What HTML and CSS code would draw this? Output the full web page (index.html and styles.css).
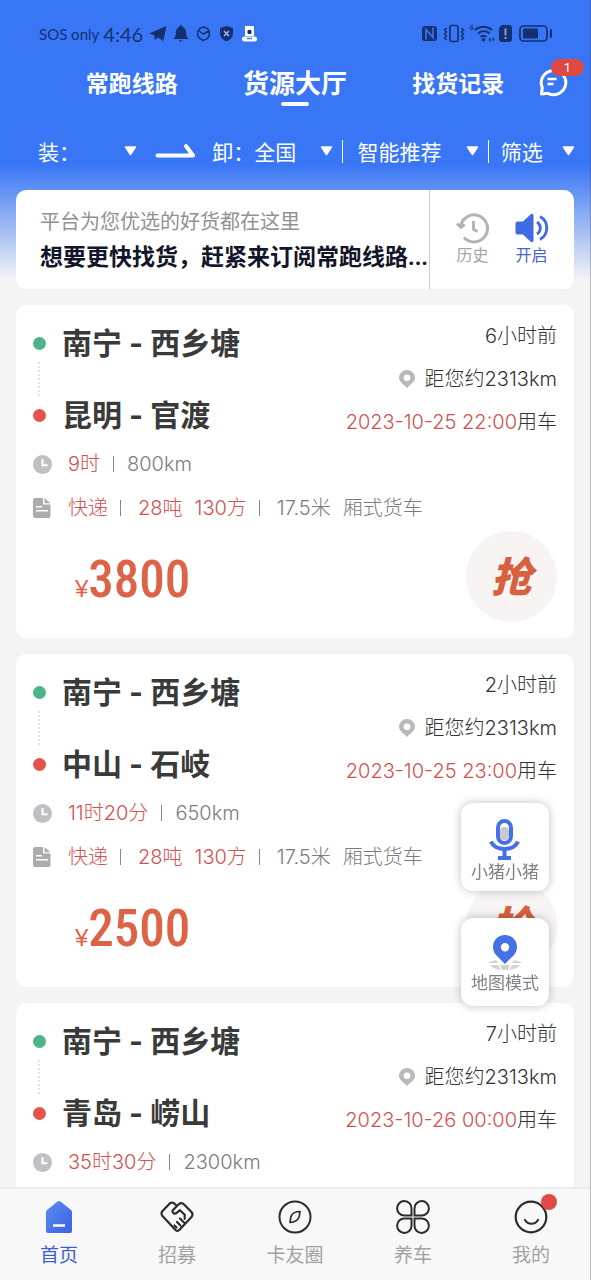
FILE: index.html
```html
<!DOCTYPE html>
<html lang="zh-CN">
<head>
<meta charset="utf-8">
<meta name="viewport" content="width=device-width, initial-scale=1">
<title>货源大厅</title>
<link rel="stylesheet" href="styles.css">
</head>
<body>
<svg class="sprite" aria-hidden="true">
  <symbol id="i-clock" viewBox="0 0 19 19"><circle cx="9.500" cy="9.500" r="9.500" fill="#bfc0c4"/><path d="M9.500 4v6.200h5" fill="none" stroke="#fff" stroke-width="2"/></symbol>
  <symbol id="i-doc" viewBox="0 0 18 20"><path d="M2 0h8v6.500h7.500V18a2 2 0 0 1-2 2H2a2 2 0 0 1-2-2V2a2 2 0 0 1 2-2zM11.500 0l6 5.200h-6z" fill="#acacae"/><path d="M3 8.800h6M3 12.800h12" stroke="#fff" stroke-width="1.500"/></symbol>
  <symbol id="i-pin" viewBox="0 0 16 18"><path fill-rule="evenodd" d="M8 0a8 7.800 0 0 1 8 7.800c0 4-4.500 6.500-8 10.200C4.500 14.300 0 11.800 0 7.800A8 7.800 0 0 1 8 0zm0 4.500a3.300 3.300 0 1 0 0 6.600 3.300 3.300 0 0 0 0-6.600z" fill="#b9b9bb"/></symbol>
  <symbol id="i-caret" viewBox="0 0 13 10"><path d="M1.500 1h10L6.500 8.500z" fill="#fff" stroke="#fff" stroke-width="1.500" stroke-linejoin="round"/></symbol>
</svg>
<div class="app">
  <header class="head">
    <div class="status">
      <span class="carrier">SOS only</span><span class="time">4:46</span>
      <svg class="s-left" width="109" height="18" viewBox="0 0 109 18" fill="#15306f">
        <path d="M0 8.500L17.500 1l-3.300 15-5.200-3.600-3 2.600-.8-5z"/>
        <path d="M31.500 0c1 0 1.500.7 1.500 1.500 3 1 4.200 3.300 4.200 6.200 0 3 .6 4.300 2 5.300v1H24.800v-1c1.400-1 2-2.300 2-5.300 0-2.900 1.200-5.200 4.200-6.200C30 .7 30.500 0 31.500 0zM29.500 15.300h4l-2 1.700z"/>
        <g fill="none" stroke="#15306f" stroke-width="1.500"><path d="M54.500 2l4 1.500 1.800 3v4l-1.800 3-4 2-4-2-1.800-3v-4l1.800-3zM50 6l4.500 3 6-3.500"/></g>
        <path d="M77.500 1l6.500 2v5c0 4-2.500 6.500-6.500 8.500C73.500 14.500 71 12 71 8V3z"/><path d="M75 6l5 5M80 6l-5 5" stroke="#9bb8f8" stroke-width="1.500"/>
        <path d="M96 1h9v10h-9z" fill="#fff"/><rect x="93" y="11.500" width="15" height="5" rx="2.500" fill="#fff"/><circle cx="100.500" cy="7" r="2.200"/><path d="M98 13.500h5" stroke="#3976f5" stroke-width="1.500"/>
      </svg>
      <svg class="s-right" width="131" height="20" viewBox="0 0 131 20" fill="#15306f">
        <rect x="0" y="2" width="15" height="15" rx="3"/><path d="M4 15.500V5.500l7 8V3.500" fill="none" stroke="#3976f5" stroke-width="1.600"/>
        <rect x="28" y="1.500" width="8" height="16" rx="1.500" fill="none" stroke="#15306f" stroke-width="1.700"/>
        <path d="M24.500 4l-2 2 2 2-2 2 2 2-2 2 2 2M39.500 4l2 2-2 2 2 2-2 2 2 2-2 2" fill="none" stroke="#15306f" stroke-width="1.500"/>
        <path d="M51 .800c-2.500.5-2.700 2.500-2.500 4s2.500 1.500 2.500-.3-1.600-1.500-2.500-.3" fill="none" stroke="#15306f" stroke-width="1"/>
        <path d="M53 6c5-4.500 12-4.500 17 0M56 9.500c3.500-3 8-3 11.500 0M58.500 13c2-1.700 4-1.700 6 0" fill="none" stroke="#15306f" stroke-width="2"/><circle cx="61.500" cy="15.800" r="1.800"/>
        <path d="M66.500 15.500l2-2.500v5zM72.500 15.500l-2-2.500v5z"/>
        <path d="M80 1h7a3 3 0 0 1 3 3v11a3 3 0 0 1-3 3h-7a3 3 0 0 1-3-3V4z"/><path d="M83.500 4.500v7M83.500 13v2" stroke="#87a9f5" stroke-width="1.800"/>
        <rect x="98" y="2" width="27" height="15" rx="3.500" fill="none" stroke="#15306f" stroke-width="1.700"/><rect x="101" y="4.500" width="15" height="10" rx="1"/><rect x="128" y="5" width="2" height="9" rx="1"/>
      </svg>
    </div>
    <nav class="tabs">
      <a href="#" class="tab">常跑线路</a>
      <a href="#" class="tab active">货源大厅</a>
      <a href="#" class="tab">找货记录</a>
      <button class="chat" aria-label="消息">
        <svg width="30" height="30" viewBox="0 0 30 30" fill="none" stroke="#fff" stroke-width="3"><path d="M4.300 20.500A12.300 12 0 1 1 10 26.300L3.500 27z" stroke-linejoin="round"/><path d="M9.500 12h9M9.500 17h6" stroke-width="2.500"/></svg>
        <span class="badge">1</span>
      </button>
    </nav>
    <div class="filters">
      <button class="filter load">装：<svg class="caret"><use href="#i-caret"/></svg></button>
      <svg class="arrow" width="42" height="16" viewBox="0 0 42 16"><path d="M2.500 12.500H38L31 3" fill="none" stroke="#fff" stroke-width="4" stroke-linecap="round" stroke-linejoin="round"/></svg>
      <button class="filter unload">卸：全国<svg class="caret"><use href="#i-caret"/></svg></button>
      <i class="bar"></i>
      <button class="filter smart">智能推荐<svg class="caret"><use href="#i-caret"/></svg></button>
      <i class="bar"></i>
      <button class="filter pick">筛选<svg class="caret"><use href="#i-caret"/></svg></button>
    </div>
  </header>

  <main class="list">
    <section class="promo">
      <div class="promo-text">
        <p class="promo-sub">平台为您优选的好货都在这里</p>
        <p class="promo-title">想要更快找货，赶紧来订阅常跑线路...</p>
      </div>
      <div class="promo-actions">
        <button class="tool">
          <svg width="34" height="32" viewBox="0 0 34 32" fill="none" stroke="#b3b3b3" stroke-width="3"><path d="M4.500 16A13.500 13.500 0 1 1 8 25.500"/><path d="M1 11.500l3.800 4 4-2.800" stroke-width="2.800"/><path d="M17.500 9v8.500l4 2" stroke-width="2.800"/></svg>
          历史
        </button>
        <button class="tool on">
          <svg width="34" height="32" viewBox="0 0 34 32"><path d="M2.500 9.500H8L15.500 2.500q3-2 3 1v25q0 3-3 1L8 22.500H2.500q-2 0-2-2v-9q0-2 2-2z" fill="#416be4"/><path d="M22 10c4.500 3 4.500 9 0 12M25 4.500c9 5 9 18 0 23" fill="none" stroke="#416be4" stroke-width="2.800"/></svg>
          开启
        </button>
      </div>
    </section>

    <article class="card">
      <div class="top">
        <div class="route">
          <h2 class="place"><i class="dot from"></i>南宁 - 西乡塘</h2>
          <i class="dots"></i>
          <h2 class="place"><i class="dot to"></i>昆明 - 官渡</h2>
        </div>
        <div class="meta">
          <p>6小时前</p>
          <p class="away"><svg class="pin"><use href="#i-pin"/></svg>距您约2313km</p>
          <p><span class="red">2023-10-25 22:00</span>用车</p>
        </div>
      </div>
      <p class="row"><svg class="ico"><use href="#i-clock"/></svg><span class="red">9时</span><i class="sep"></i><span>800km</span></p>
      <p class="row"><svg class="ico doc"><use href="#i-doc"/></svg><span class="red">快递</span><i class="sep wide"></i><span class="red">28吨</span><span class="red next">130方</span><i class="sep wide"></i><span>17.5米</span><span class="next">厢式货车</span></p>
      <div class="foot"><p class="price"><small>¥</small>3800</p><button class="grab">抢</button></div>
    </article>

    <article class="card">
      <div class="top">
        <div class="route">
          <h2 class="place"><i class="dot from"></i>南宁 - 西乡塘</h2>
          <i class="dots"></i>
          <h2 class="place"><i class="dot to"></i>中山 - 石岐</h2>
        </div>
        <div class="meta">
          <p>2小时前</p>
          <p class="away"><svg class="pin"><use href="#i-pin"/></svg>距您约2313km</p>
          <p><span class="red">2023-10-25 23:00</span>用车</p>
        </div>
      </div>
      <p class="row"><svg class="ico"><use href="#i-clock"/></svg><span class="red">11时20分</span><i class="sep"></i><span>650km</span></p>
      <p class="row"><svg class="ico doc"><use href="#i-doc"/></svg><span class="red">快递</span><i class="sep wide"></i><span class="red">28吨</span><span class="red next">130方</span><i class="sep wide"></i><span>17.5米</span><span class="next">厢式货车</span></p>
      <div class="foot"><p class="price"><small>¥</small>2500</p><button class="grab">抢</button></div>
    </article>

    <article class="card">
      <div class="top">
        <div class="route">
          <h2 class="place"><i class="dot from"></i>南宁 - 西乡塘</h2>
          <i class="dots"></i>
          <h2 class="place"><i class="dot to"></i>青岛 - 崂山</h2>
        </div>
        <div class="meta">
          <p>7小时前</p>
          <p class="away"><svg class="pin"><use href="#i-pin"/></svg>距您约2313km</p>
          <p><span class="red">2023-10-26 00:00</span>用车</p>
        </div>
      </div>
      <p class="row"><svg class="ico"><use href="#i-clock"/></svg><span class="red">35时30分</span><i class="sep"></i><span>2300km</span></p>
    </article>
  </main>

  <div class="floats">
    <button class="float">
      <svg width="34" height="42" viewBox="0 0 34 42" fill="none" stroke="#4472e6"><rect x="10" y="2" width="13" height="22" rx="6.500" stroke-width="4"/><rect x="12" y="8" width="9" height="13" rx="4" fill="#c9cad0" stroke="none"/><path d="M3 22.500c4 10 23 10 27 0" stroke-width="4"/><path d="M16.500 30v8M10 39h13" stroke-width="4"/></svg>
      小猪小猪
    </button>
    <button class="float map">
      <svg width="34" height="38" viewBox="0 0 34 38"><path d="M1 28l7-2 2 3H1zM33 28l-7-2-2 3h9zM2 31h8l3 5c-5-1-9-2-11-5zM32 31h-8l-3 5c5-1 9-2 11-5zM12 31h10l-2 5h-6z" fill="#d3d3d3"/><path fill-rule="evenodd" d="M17 1c7 0 12 5 12 12 0 8-7 11-12 17C12 24 5 21 5 13 5 6 10 1 17 1zm0 8a4.200 4.200 0 1 0 0 8.400A4.200 4.200 0 0 0 17 9z" fill="#4472e6"/></svg>
      地图模式
    </button>
  </div>

  <nav class="dock">
    <a href="#" class="dock-item current">
      <svg width="34" height="34" viewBox="0 0 34 34"><defs><linearGradient id="home" x1="0" y1="0" x2="1" y2="1"><stop offset="0" stop-color="#5b8cf0"/><stop offset="1" stop-color="#3a63e4"/></linearGradient></defs><path d="M15.500 1.500q1.500-1.200 3 0L29 10q1 .8 1 2v19q0 2-2 2H6q-2 0-2-2V12q0-1.200 1-2z" fill="url(#home)"/><path d="M11 25.500h12" stroke="#fff" stroke-width="2.500"/></svg>
      首页
    </a>
    <a href="#" class="dock-item">
      <svg width="34" height="34" viewBox="0 0 34 34" fill="none" stroke="#2c2c2c" stroke-width="2.200" stroke-linejoin="round" stroke-linecap="round"><path d="M17 6l-2.500-2.300q-2.500-2-5 0L2.500 11q-2 2.500 0 5l13 14q2 2 4-.2L31.500 17q2-2.500 0-5L23.500 4q-2.500-1.800-4.500 0l-6 6q-1.200 2 .5 3.200 1.700 1 3.200-.3l3.300-2.700 4.700 4.600v4"/><path d="M20 18.500l4 4M17 22l3.500 3.500M14.500 25.500l2 2"/></svg>
      招募
    </a>
    <a href="#" class="dock-item">
      <svg width="34" height="34" viewBox="0 0 34 34" fill="none" stroke="#2c2c2c" stroke-width="2"><circle cx="17" cy="17" r="15.500"/><path d="M22 11.500c-5 0-8 2-9 5-.5 1.700-.5 3.500-1 6 5-.3 7.800-2.200 9-5.200.6-1.700.5-3.500 1-5.800z" stroke-width="1.700" stroke-linejoin="round"/></svg>
      卡友圈
    </a>
    <a href="#" class="dock-item">
      <svg width="34" height="34" viewBox="0 0 34 34" fill="none" stroke="#2c2c2c" stroke-width="2"><path d="M15.500 15.500H8.500a7.200 7.200 0 1 1 7-7zM18.500 15.500h7a7.200 7.200 0 1 0-7-7zM15.500 18.500H8.500a7.200 7.200 0 1 0 7 7zM18.500 18.500h7a7.200 7.200 0 1 1-7 7z"/></svg>
      养车
    </a>
    <a href="#" class="dock-item">
      <svg width="34" height="34" viewBox="0 0 34 34" fill="none" stroke="#2c2c2c" stroke-width="2.200"><circle cx="17" cy="17" r="15.300"/><path d="M11 20c3 5 10 5 13 0" stroke-linecap="round"/></svg>
      我的
      <i class="alert"></i>
    </a>
  </nav>
</div>
</body>
</html>
```
FILE: styles.css
```css
* { box-sizing: border-box; margin: 0; padding: 0; }
body { font-family: Inter, "Noto Sans CJK SC", sans-serif; color: #333; }
button { border: 0; background: none; font: inherit; color: inherit; cursor: pointer; }
a { color: inherit; text-decoration: none; }
svg { display: block; flex: none; }
i { display: block; flex: none; }
.sprite { position: absolute; width: 0; height: 0; }

.app {
  height: 100vh;
  display: flex;
  flex-direction: column;
  border-right: 1px solid rgba(60, 60, 80, 0.3);
  background: linear-gradient(#3976f5 0, #3976f5 165px, #f4f4f4 280px);
}

/* header */
.head { color: #fff; }
.status { display: flex; align-items: center; height: 62px; padding: 5px 37px 0 39px; color: #15306f; }
.carrier { font: 15px/20px Lato, sans-serif; }
.time { font: 20px/20px Lato, sans-serif; margin-left: 4px; }
.s-left { margin-left: 6px; }
.s-right { margin-left: auto; }
.tabs { display: grid; grid-template-columns: 50px 1fr 1fr 1fr 50px; align-items: center; height: 40px; }
.tab { font: bold 23px/32px "Noto Sans CJK SC", sans-serif; text-align: center; }
.tab:first-child { grid-column: 2; }
.tab.active { position: relative; font-size: 26px; }
.tab.active::after {
  content: ""; position: absolute; left: 50%; bottom: -8px;
  width: 28px; height: 4px; margin-left: -14px; border-radius: 2px; background: #fff;
}
.chat { position: relative; width: 30px; height: 34px; margin-left: -2px; }
.badge {
  position: absolute; left: 13px; top: -6px; width: 33px; height: 17px;
  border-radius: 9px; background: #e0493f; font: 13px/17px Roboto, sans-serif; text-align: center;
}
.filters { display: flex; align-items: center; height: 96px; padding: 2px 15px 0 38px; }
.filter {
  display: flex; align-items: center; justify-content: space-between;
  font: 21px/30px "Noto Sans CJK SC", sans-serif; white-space: nowrap;
}
.caret { width: 13px; height: 10px; }
.load { flex: 99 1 0; }
.arrow { margin: 0 15px 0 18px; }
.unload { flex: 120 1 0; }
.smart { flex: 121 1 0; margin-left: 15px; }
.pick { flex: 74 1 0; margin-left: 12px; }
.bar { width: 1px; height: 23px; margin-left: 9px; background: #fff; }

/* feed */
.list {
  flex: 1 1 0; min-height: 0; overflow: hidden;
  display: flex; flex-direction: column; gap: 16px;
  margin-top: -8px; padding: 0 16px;
}
.promo, .card { flex: none; background: #fff; border-radius: 10px; }
.promo { display: flex; height: 99px; }
.promo-text { flex: 1 1 0; min-width: 0; padding: 16px 0 0 24px; white-space: nowrap; }
.promo-sub { font: 20px/30px "Noto Sans CJK SC", sans-serif; color: #919191; }
.promo-title { font: bold 23px/44px Roboto, "Noto Sans CJK SC", sans-serif; color: #12162a; }
.promo-actions { display: flex; padding: 0 13px; border-left: 1px solid #ccc; }
.tool {
  display: flex; flex-direction: column; align-items: center; width: 59px; padding-top: 22px;
  font-size: 16px; line-height: 22px; color: #a5a5a5;
}
.tool.on { color: #4a67c0; }

.card { min-height: 333px; padding: 16px 17px; }
.top { display: flex; justify-content: space-between; margin-bottom: 12px; }
.place { display: flex; align-items: center; gap: 16px; font-size: 30px; line-height: 44px; font-weight: bold; color: #3a3a3a; }
.dot { width: 13px; height: 13px; border-radius: 50%; }
.from { background: #4fb38a; }
.to { background: #e5534b; }
.dots { width: 0; height: 34px; margin: -3px 0 -3px 5px; border-left: 2px dotted #e4e4e4; }
.meta { display: flex; flex-direction: column; gap: 13px; align-items: flex-end; font-size: 20px; line-height: 30px; font-weight: 300; }
.away { display: flex; align-items: center; gap: 10px; }
.pin { width: 16px; height: 18px; }
.red { color: #d2504f; }
.row { display: flex; align-items: center; font-size: 20px; line-height: 30px; font-weight: 300; color: #7b7c82; }
.row + .row { margin-top: 14px; }
.ico { width: 19px; height: 19px; margin-right: 16px; }
.doc { width: 18px; height: 20px; margin-right: 17px; }
.sep { width: 1px; height: 16px; margin: 0 13px; background: #85868b; }
.sep.wide { margin: 0 17px 0 12px; }
.next { margin-left: 12px; }
.foot { display: flex; align-items: center; justify-content: space-between; margin-top: 8px; padding-left: 42px; }
.price { padding-top: 6px; font: 500 51px/60px "Roboto Condensed", sans-serif; color: #dd6246; }
.price small { font: 24px/30px "Liberation Sans", sans-serif; }
.grab {
  width: 91px; height: 91px; padding-bottom: 6px; border-radius: 50%; background: #f9f4f4;
  font: italic 900 41px/60px "Noto Sans CJK SC", sans-serif; color: #d8603f; text-align: center;
}

/* floating shortcuts */
.floats { position: fixed; right: 42px; bottom: 274px; display: flex; flex-direction: column; gap: 27px; }
.float {
  display: flex; flex-direction: column; align-items: center; justify-content: flex-end;
  width: 88px; height: 88px; padding-bottom: 8px; border-radius: 12px; background: #fff;
  box-shadow: 0 0 10px rgba(0, 0, 0, 0.25);
  font-size: 17px; line-height: 22px; color: #808188; white-space: nowrap;
}
.float.map { padding-bottom: 12px; }

/* bottom navigation */
.dock {
  display: grid; grid-template-columns: repeat(5, 1fr); height: 93px; flex: none;
  background: #f8f8f8; border-top: 2px solid #ececec;
}
.dock-item {
  position: relative; display: flex; flex-direction: column; align-items: center; gap: 7px;
  padding-top: 11px; font-size: 19px; line-height: 30px; color: #a2a2a2;
}
.current { color: #3f5fd0; }
.alert { position: absolute; left: 50%; top: 5px; width: 16px; height: 16px; margin-left: 10px; border-radius: 50%; background: #df4a45; }
```
